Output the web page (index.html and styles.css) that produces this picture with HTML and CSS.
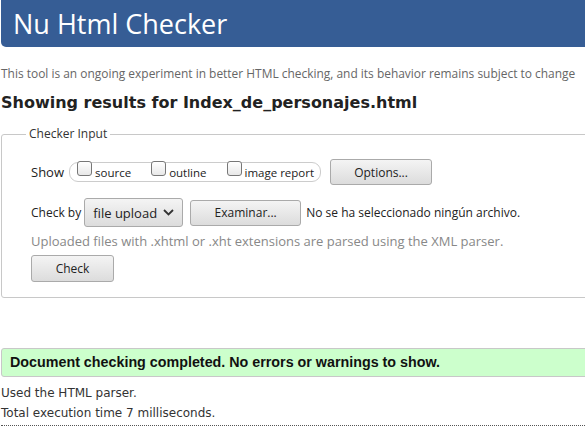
FILE: index.html
```html
<!DOCTYPE html>
<html lang="en">
<head>
<meta charset="utf-8">
<title>Nu Html Checker</title>
<link rel="stylesheet" href="styles.css">
</head>
<body>
<div class="page">
  <header class="banner"><h1 class="title">Nu Html Checker</h1></header>
  <p class="intro">This tool is an ongoing experiment in better HTML checking, and its behavior remains subject to change</p>
  <h2 class="results-title">Showing results for Index_de_personajes.html</h2>
  <fieldset class="checker">
    <legend class="legend">Checker Input</legend>
    <div class="row row-show">
      <span class="row-label">Show</span>
      <div class="opts">
        <label class="opt"><span class="cb"></span><span class="opt-text">source</span></label>
        <label class="opt"><span class="cb"></span><span class="opt-text">outline</span></label>
        <label class="opt"><span class="cb"></span><span class="opt-text">image report</span></label>
      </div>
      <button class="btn btn-options">Options...</button>
    </div>
    <div class="row row-check">
      <span class="row-label row-label-small">Check by</span>
      <button class="btn btn-select">file upload <svg class="chev" width="11" height="7" viewBox="0 0 11 7"><path d="M1 1 L5.5 5.5 L10 1" fill="none" stroke="#333" stroke-width="1.8"/></svg></button>
      <button class="btn btn-browse">Examinar...</button>
      <span class="file-name">No se ha seleccionado ningún archivo.</span>
    </div>
    <p class="note">Uploaded files with .xhtml or .xht extensions are parsed using the XML parser.</p>
    <button class="btn btn-check">Check</button>
  </fieldset>
  <div class="success">Document checking completed. No errors or warnings to show.</div>
  <div class="details">
    <p class="detail">Used the HTML parser.</p>
    <p class="detail">Total execution time 7 milliseconds.</p>
  </div>
</div>
</body>
</html>
```
FILE: styles.css
```css
html, body {
  margin: 0;
  padding: 0;
  overflow: hidden;
  background: #fff;
}
body {
  font-family: "Open Sans", "Noto Sans", sans-serif;
  color: #222;
}
.page {
  margin-left: 1px;
  width: 620px;
}
.banner {
  height: 47px;
  background: #365d95;
  border-radius: 0 0 0 5px;
}
.title {
  margin: 0;
  padding-left: 12px;
  font-size: 27px;
  font-weight: normal;
  line-height: 47px;
  color: #fff;
}
.intro {
  margin: 18px 0 0;
  font-size: 11.95px;
  line-height: 18px;
  color: #666;
}
.results-title {
  margin: 10px 0 0;
  font-family: "DejaVu Sans", sans-serif;
  font-weight: bold;
  font-size: 16px;
  line-height: 20px;
  color: #222;
}
.checker {
  margin: 13px 0 0;
  padding: 17px 0 15px 29px;
  border: 1px solid #c8c8c8;
  border-radius: 3px;
  min-width: 0;
}
.legend {
  margin-left: -5px;
  padding: 0 3px;
  font-size: 12px;
  line-height: 16px;
  color: #333;
}
.row {
  display: flex;
  align-items: center;
}
.row-show {
  height: 26px;
}
.row-label {
  font-size: 13px;
  color: #222;
}
.row-label-small {
  font-size: 12px;
}
.opts {
  display: flex;
  align-items: flex-start;
  height: 18px;
  margin-left: 5px;
  padding: 0 6px 0 7px;
  border: 1px solid #ccc;
  border-radius: 9px;
}
.opt {
  display: flex;
  align-items: flex-start;
  margin-right: 20px;
}
.opt:last-child {
  margin-right: 0;
}
.cb {
  width: 13px;
  height: 13px;
  margin-top: -2px;
  border: 1px solid #777;
  border-radius: 3px;
  background: linear-gradient(#fff, #e8e8e8);
}
.opt-text {
  margin-left: 3px;
  font-size: 11.5px;
  line-height: 19px;
  color: #222;
}
.btn {
  font-family: "Open Sans", "Noto Sans", sans-serif;
  font-size: 12px;
  color: #222;
  border: 1px solid #aaa;
  border-radius: 3px;
  background: linear-gradient(#f4f4f4, #dcdcdc);
  padding: 0;
}
.btn-options {
  margin-left: 9px;
  width: 102px;
  height: 26px;
}
.row-check {
  margin-top: 13px;
  height: 29px;
}
.btn-select {
  margin-left: 3px;
  width: 99px;
  height: 29px;
  font-size: 13px;
  display: flex;
  align-items: center;
  justify-content: center;
  gap: 6px;
}
.chev {
  display: block;
}
.btn-browse {
  margin-left: 7px;
  width: 111px;
  height: 26px;
}
.file-name {
  margin-left: 5px;
  font-size: 12px;
  color: #222;
}
.note {
  margin: 6px 0 0;
  font-size: 13px;
  line-height: 16px;
  color: #888;
}
.btn-check {
  display: block;
  margin-top: 6px;
  width: 83px;
  height: 27px;
}
.success {
  margin-top: 50px;
  height: 27px;
  padding-left: 8px;
  border: 1px solid #c8c8c8;
  border-radius: 3px;
  background: #ccffcc;
  font-family: "Liberation Sans", Arial, sans-serif;
  font-weight: bold;
  font-size: 14.3px;
  line-height: 27px;
  color: #111;
}
.details {
  margin-top: 6px;
  padding-bottom: 2px;
  border-bottom: 1px dotted #555;
}
.detail {
  margin: 0;
  font-family: "DejaVu Sans", sans-serif;
  font-size: 12px;
  line-height: 20px;
  color: #333;
}
```
